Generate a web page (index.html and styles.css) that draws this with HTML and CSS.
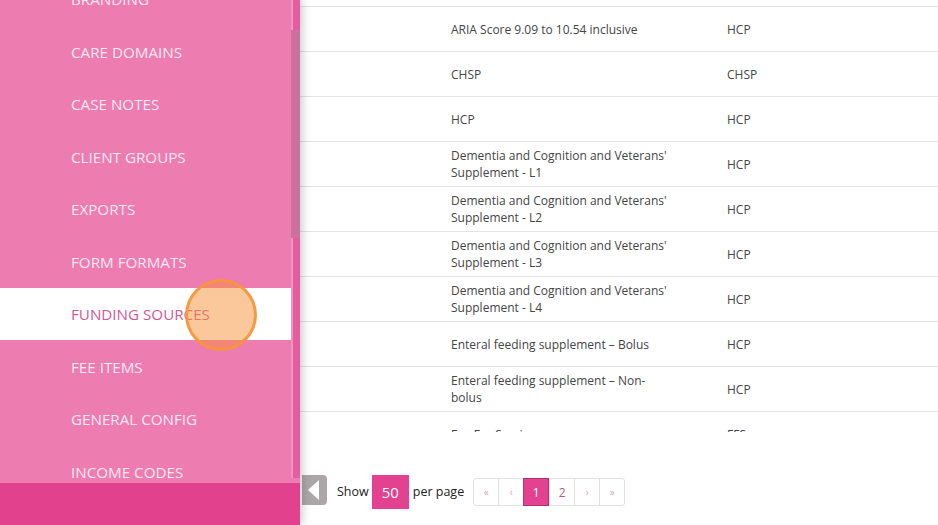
FILE: index.html
```html
<!DOCTYPE html>
<html lang="en">
<head>
<meta charset="utf-8">
<title>Funding Sources</title>
<link rel="stylesheet" href="styles.css">
</head>
<body>
<div class="app">
  <aside class="sidebar">
    <div class="sidebar-body">
      <nav class="nav">
        <ul class="nav-list">
          <li class="nav-item">BRANDING</li>
          <li class="nav-item">CARE DOMAINS</li>
          <li class="nav-item">CASE NOTES</li>
          <li class="nav-item">CLIENT GROUPS</li>
          <li class="nav-item">EXPORTS</li>
          <li class="nav-item">FORM FORMATS</li>
          <li class="nav-item active">FUNDING SOURCES</li>
          <li class="nav-item">FEE ITEMS</li>
          <li class="nav-item">GENERAL CONFIG</li>
          <li class="nav-item">INCOME CODES</li>
          <li class="nav-item">LOCATIONS</li>
        </ul>
      </nav>
      <div class="scrollbar"><div class="thumb"></div></div>
    </div>
    <div class="sidebar-foot"></div>
    <div class="click-marker"></div>
  </aside>

  <main class="main">
    <div class="table-scroll">
      <div class="rows">
        <div class="row"><div class="cell c0"></div><div class="cell c1">ARIA Score 9.09 to 10.54 inclusive</div><div class="cell c2">HCP</div></div>
        <div class="row"><div class="cell c0"></div><div class="cell c1">CHSP</div><div class="cell c2">CHSP</div></div>
        <div class="row"><div class="cell c0"></div><div class="cell c1">HCP</div><div class="cell c2">HCP</div></div>
        <div class="row"><div class="cell c0"></div><div class="cell c1">Dementia and Cognition and Veterans' Supplement - L1</div><div class="cell c2">HCP</div></div>
        <div class="row"><div class="cell c0"></div><div class="cell c1">Dementia and Cognition and Veterans' Supplement - L2</div><div class="cell c2">HCP</div></div>
        <div class="row"><div class="cell c0"></div><div class="cell c1">Dementia and Cognition and Veterans' Supplement - L3</div><div class="cell c2">HCP</div></div>
        <div class="row"><div class="cell c0"></div><div class="cell c1">Dementia and Cognition and Veterans' Supplement - L4</div><div class="cell c2">HCP</div></div>
        <div class="row"><div class="cell c0"></div><div class="cell c1">Enteral feeding supplement – Bolus</div><div class="cell c2">HCP</div></div>
        <div class="row"><div class="cell c0"></div><div class="cell c1">Enteral feeding supplement – Non-bolus</div><div class="cell c2">HCP</div></div>
        <div class="row"><div class="cell c0"></div><div class="cell c1">Fee For Service</div><div class="cell c2">FFS</div></div>
      </div>
    </div>
    <div class="footer">
      <button class="collapse" aria-label="Collapse"><span class="tri"></span></button>
      <span class="label show">Show</span>
      <span class="per-box">50</span>
      <span class="label">per page</span>
      <ul class="pager">
        <li class="pg arrow">«</li>
        <li class="pg arrow">‹</li>
        <li class="pg current">1</li>
        <li class="pg">2</li>
        <li class="pg arrow">›</li>
        <li class="pg arrow">»</li>
      </ul>
    </div>
  </main>
</div>
</body>
</html>
```

FILE: styles.css
```css
* { box-sizing: border-box; }
html, body {
  margin: 0;
  padding: 0;
  background: #fff;
  font-family: "Open Sans", "Noto Sans", "Liberation Sans", sans-serif;
}
.app {
  display: flex;
  width: 938px;
  height: 525px;
  overflow: hidden;
}

/* Sidebar */
.sidebar {
  position: relative;
  z-index: 2;
  width: 300px;
  flex: 0 0 300px;
  height: 525px;
  display: flex;
  flex-direction: column;
  background: #ed7cb1;
  box-shadow: 2px 0 9px rgba(0,0,0,0.22);
}
.sidebar-body {
  flex: 1;
  display: flex;
  overflow: hidden;
}
.nav {
  flex: 1;
  overflow: hidden;
}
.nav-list {
  list-style: none;
  margin: -27.25px 0 0;
  padding: 0;
}
.nav-item {
  height: 52.5px;
  display: flex;
  align-items: center;
  padding-left: 71px;
  font-size: 15.2px;
  color: #fde8f2;
}
.nav-item.active {
  background: #fff;
  color: #d0589a;
}
.scrollbar {
  position: relative;
  width: 9px;
  flex: 0 0 9px;
  background: #e65c9e;
  border-left: 2px solid #f294c0;
  margin-bottom: 5px;
}
.thumb {
  position: absolute;
  left: -2px;
  right: 0;
  top: 30px;
  height: 208px;
  background: #cd6f9f;
}
.sidebar-foot {
  height: 42px;
  flex: 0 0 42px;
  background: #e2418e;
}
.click-marker {
  position: absolute;
  left: 185px;
  top: 279px;
  width: 72px;
  height: 72px;
  border-radius: 50%;
  background: rgba(248,145,57,0.5);
  border: 3px solid rgba(245,150,60,0.92);
}

/* Main */
.main {
  flex: 1;
  display: flex;
  flex-direction: column;
  min-width: 0;
}
.table-scroll {
  height: 432px;
  overflow: hidden;
}
.rows {
  margin-top: 6px;
  border-top: 1px solid #e3e3e3;
}
.row {
  display: flex;
  height: 45px;
  border-bottom: 1px solid #e3e3e3;
  align-items: center;
  font-size: 12px;
  line-height: 17px;
  color: #454545;
}
.c0 { width: 151px; flex: 0 0 151px; }
.c1 { width: 276px; flex: 0 0 276px; padding-right: 56px; }
.c2 { flex: 1; }

.footer {
  flex: 1;
  display: flex;
  align-items: flex-start;
  padding: 43px 0 0 2px;
}
.collapse {
  width: 25px;
  height: 30px;
  margin: 0 10px 0 0;
  padding: 0;
  border: 0;
  background: #aba7a9;
  border-radius: 0 4px 4px 0;
  display: flex;
  align-items: center;
  justify-content: center;
}
.tri {
  width: 0;
  height: 0;
  border-top: 10px solid transparent;
  border-bottom: 10px solid transparent;
  border-right: 11px solid #fff;
  margin-left: -2px;
}
.label {
  font-size: 12.5px;
  color: #222;
  line-height: 34px;
}
.per-box {
  width: 37px;
  height: 34px;
  margin: 0 4px 0 3px;
  background: #e2428f;
  color: #fff;
  font-size: 15px;
  display: flex;
  align-items: center;
  justify-content: center;
}
.pager {
  list-style: none;
  margin: 3px 0 0 9px;
  padding: 0;
  display: flex;
  border: 1px solid #e2e2e2;
  border-radius: 3px;
  height: 28px;
}
.pg {
  width: 25px;
  height: 26px;
  display: flex;
  align-items: center;
  justify-content: center;
  font-size: 12px;
  color: #b4578a;
  border-left: 1px solid #e2e2e2;
}
.pg:first-child { border-left: 0; width: 24px; }
.pg.arrow {
  color: #dba3be;
  font-size: 10px;
}
.pg.current {
  background: #e2428f;
  color: #fff;
  border: 1px solid #b3336f;
  height: 28px;
  margin-top: -1px;
  width: 26px;
}
```
